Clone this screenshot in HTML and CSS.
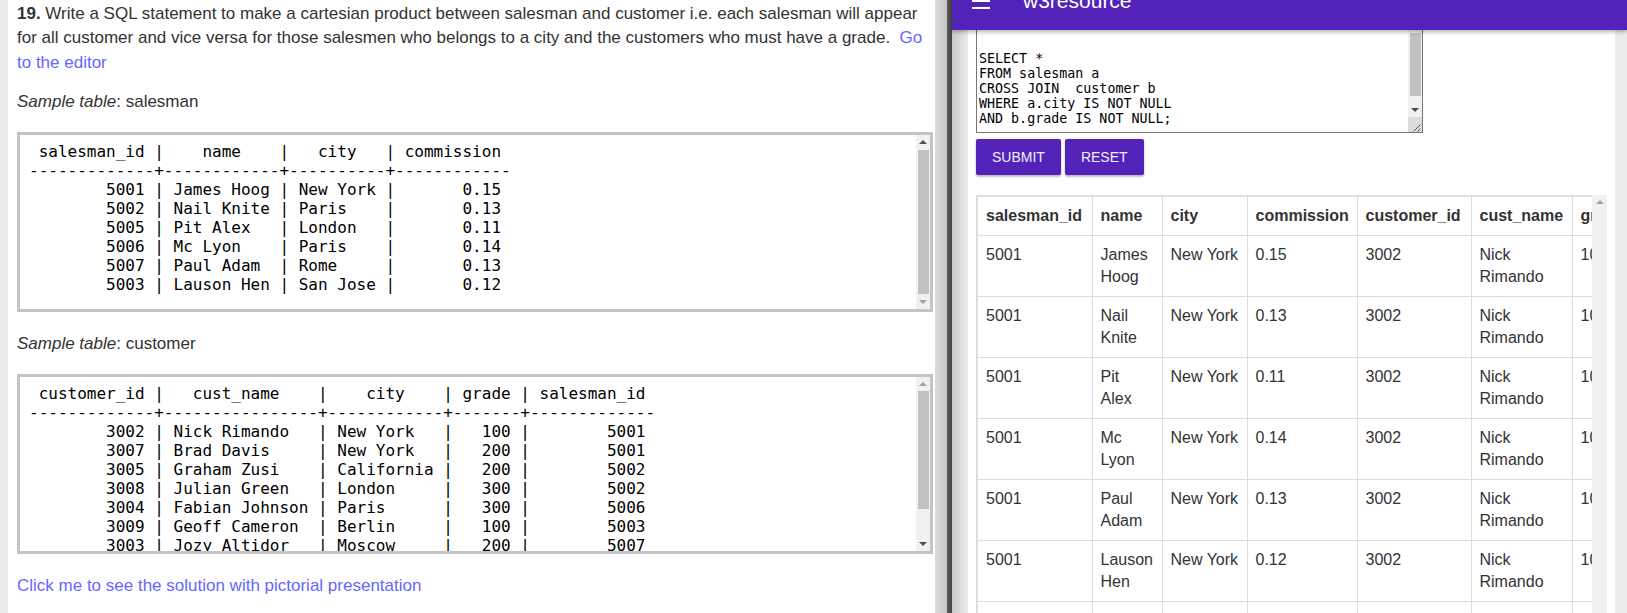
FILE: index.html
```html
<!DOCTYPE html>
<html lang="en">
<head>
<meta charset="utf-8">
<title>SQL Exercise 19</title>
<link rel="stylesheet" href="styles.css">
</head>
<body>
<div class="page">
  <main class="left">
    <p class="q"><b>19.</b> Write a SQL statement to make a cartesian product between salesman and customer i.e. each salesman will appear for all customer and vice versa for those salesmen who belongs to a city and the customers who must have a grade.&nbsp; <a class="lnk" href="#">Go to the editor</a></p>
    <p class="cap"><i>Sample table</i>: salesman</p>
    <div class="sbox">
      <pre class="sample">
 salesman_id |    name    |   city   | commission
-------------+------------+----------+------------
        5001 | James Hoog | New York |       0.15
        5002 | Nail Knite | Paris    |       0.13
        5005 | Pit Alex   | London   |       0.11
        5006 | Mc Lyon    | Paris    |       0.14
        5007 | Paul Adam  | Rome     |       0.13
        5003 | Lauson Hen | San Jose |       0.12</pre>
      <div class="vbar">
        <span class="arr up dark"></span>
        <span class="track"><span class="thumb t1"></span></span>
        <span class="arr dn"></span>
      </div>
    </div>
    <p class="cap"><i>Sample table</i>: customer</p>
    <div class="sbox">
      <pre class="sample">
 customer_id |   cust_name    |    city    | grade | salesman_id
-------------+----------------+------------+-------+-------------
        3002 | Nick Rimando   | New York   |   100 |        5001
        3007 | Brad Davis     | New York   |   200 |        5001
        3005 | Graham Zusi    | California |   200 |        5002
        3008 | Julian Green   | London     |   300 |        5002
        3004 | Fabian Johnson | Paris      |   300 |        5006
        3009 | Geoff Cameron  | Berlin     |   100 |        5003
        3003 | Jozy Altidor   | Moscow     |   200 |        5007
        3001 | Brad Guzan     | London     |       |        5005</pre>
      <div class="vbar">
        <span class="arr up"></span>
        <span class="track"><span class="thumb t2"></span></span>
        <span class="arr dn dark"></span>
      </div>
    </div>
    <p class="q"><a class="lnk" href="#">Click me to see the solution with pictorial presentation</a></p>
  </main>
  <div class="divider"></div>
  <section class="right">
    <header class="bar">
      <svg class="menu" width="18" height="16" viewBox="0 0 18 16" aria-hidden="true">
        <rect x="0" y="0" width="18" height="2" fill="#fff"/>
        <rect x="0" y="7" width="18" height="2" fill="#fff"/>
        <rect x="0" y="14" width="18" height="2" fill="#fff"/>
      </svg>
      <span class="brand">w3resource</span>
    </header>
    <div class="card">
      <div class="ed">
        <textarea class="editor" spellcheck="false">


SELECT *
FROM salesman a
CROSS JOIN  customer b
WHERE a.city IS NOT NULL
AND b.grade IS NOT NULL;
</textarea>
        <div class="vbar">
          <span class="arr up dark"></span>
          <span class="track"><span class="thumb t3"></span></span>
          <span class="arr dn dark"></span>
          <span class="grip">
            <svg width="14" height="15" viewBox="0 0 14 15" aria-hidden="true">
              <path d="M12.5 7.5 L5.5 14.5 M12.5 11.5 L9.5 14.5" stroke="#555" stroke-width="1" fill="none"/>
            </svg>
          </span>
        </div>
      </div>
      <div class="btns">
        <button class="btn" type="button">SUBMIT</button>
        <button class="btn" type="button">RESET</button>
      </div>
      <div class="results">
        <div class="tscroll">
          <table class="res">
            <colgroup>
              <col class="w1"><col class="w2"><col class="w3"><col class="w4"><col class="w5"><col class="w6"><col class="w7"><col class="w8"><col class="w9">
            </colgroup>
            <thead>
              <tr><th>salesman_id</th><th>name</th><th>city</th><th>commission</th><th>customer_id</th><th>cust_name</th><th>grade</th><th>city</th><th>salesman_id</th></tr>
            </thead>
            <tbody>
              <tr><td>5001</td><td>James Hoog</td><td class="nw">New York</td><td>0.15</td><td>3002</td><td>Nick Rimando</td><td>100</td><td class="nw">New York</td><td>5001</td></tr>
              <tr><td>5001</td><td>Nail Knite</td><td class="nw">New York</td><td>0.13</td><td>3002</td><td>Nick Rimando</td><td>100</td><td class="nw">New York</td><td>5001</td></tr>
              <tr><td>5001</td><td>Pit Alex</td><td class="nw">New York</td><td>0.11</td><td>3002</td><td>Nick Rimando</td><td>100</td><td class="nw">New York</td><td>5001</td></tr>
              <tr><td>5001</td><td>Mc Lyon</td><td class="nw">New York</td><td>0.14</td><td>3002</td><td>Nick Rimando</td><td>100</td><td class="nw">New York</td><td>5001</td></tr>
              <tr><td>5001</td><td>Paul Adam</td><td class="nw">New York</td><td>0.13</td><td>3002</td><td>Nick Rimando</td><td>100</td><td class="nw">New York</td><td>5001</td></tr>
              <tr><td>5001</td><td>Lauson Hen</td><td class="nw">New York</td><td>0.12</td><td>3002</td><td>Nick Rimando</td><td>100</td><td class="nw">New York</td><td>5001</td></tr>
              <tr><td>5001</td><td>James Hoog</td><td class="nw">New York</td><td>0.15</td><td>3007</td><td>Brad Davis</td><td>200</td><td class="nw">New York</td><td>5001</td></tr>
              <tr><td>5001</td><td>Nail Knite</td><td class="nw">New York</td><td>0.13</td><td>3007</td><td>Brad Davis</td><td>200</td><td class="nw">New York</td><td>5001</td></tr>
            </tbody>
          </table>
        </div>
        <div class="vbar rv">
          <span class="arr up"></span>
          <span class="track"></span>
        </div>
      </div>
    </div>
  </section>
</div>
</body>
</html>
```

FILE: styles.css
```css
html, body {
  margin: 0;
  padding: 0;
  height: 100%;
  overflow: hidden;
  background: #fff;
}

body {
  font-family: "Liberation Sans", Arial, sans-serif;
  color: #333;
}

.page {
  display: flex;
  width: 1627px;
  height: 613px;
  overflow: hidden;
}

/* ---------- left article ---------- */
.left {
  flex: none;
  width: 935px;
  box-sizing: border-box;
  border-left: 8px solid #ebebeb;
  padding: 2px 2px 0 9px;
  font-size: 17px;
  line-height: 1.42857;
  overflow: hidden;
  background: #fff;
}

.q {
  margin: 0 0 15px;
}

.cap {
  margin: 15px 0;
}

.lnk {
  color: #6666ff;
  text-decoration: none;
}

.sbox {
  display: flex;
  box-sizing: border-box;
  height: 180px;
  margin: 18px 0 20px;
  border: 3px solid #c4c4c4;
  background: #fff;
}

.sample {
  flex: 1;
  min-width: 0;
  margin: 0;
  padding: 7px 9px 0;
  overflow: hidden;
  font-family: "DejaVu Sans Mono", monospace;
  font-size: 16px;
  line-height: 19px;
  color: #000;
}

/* drawn scrollbars */
.vbar {
  flex: none;
  width: 14px;
  display: flex;
  flex-direction: column;
  background: #f1f1f1;
}

.arr {
  flex: none;
  height: 14px;
  display: flex;
  align-items: center;
  justify-content: center;
}

.arr::before {
  content: "";
  width: 0;
  height: 0;
  border-left: 4px solid transparent;
  border-right: 4px solid transparent;
}

.up::before {
  border-bottom: 4px solid #a3a3a3;
}

.dn::before {
  border-top: 4px solid #a3a3a3;
}

.up.dark::before {
  border-bottom-color: #505050;
}

.dn.dark::before {
  border-top-color: #505050;
}

.track {
  flex: 1;
  display: flex;
  flex-direction: column;
  min-height: 0;
}

.thumb {
  flex: none;
  margin: 0 1px 0 2px;
  background: #c1c1c1;
}

.t1 {
  margin-top: 1px;
  height: 144px;
}

.t2 {
  height: 118px;
}

.t3 {
  height: 63.5px;
}

.grip {
  flex: none;
  height: 15px;
  background: #dcdcdc;
  display: flex;
}

/* ---------- splitter ---------- */
.divider {
  flex: none;
  width: 17px;
  background: linear-gradient(to right, #dcdcdc 0, #c6c6c6 12px, #5a5a5a 12px, #454545 17px);
}

/* ---------- right editor panel ---------- */
.right {
  flex: 1;
  display: flex;
  flex-direction: column;
  min-width: 0;
  background: linear-gradient(to right, #c8c8c8 0, #ececec 16px, #ececec 100%);
}

.bar {
  flex: none;
  box-sizing: border-box;
  height: 56px;
  margin-top: -26px;
  display: flex;
  align-items: flex-end;
  padding-left: 20px;
  background: #5322b8;
  color: #fff;
  position: relative;
  z-index: 2;
  box-shadow: 0 2px 4px rgba(0, 0, 0, 0.3);
}

.menu {
  flex: none;
  display: block;
  margin-bottom: 20.7px;
}

.brand {
  margin-left: 33px;
  margin-bottom: 17px;
  font-family: "Liberation Sans", Arial, sans-serif;
  font-size: 21px;
  line-height: 24px;
  color: #fff;
}

.card {
  flex: 1;
  margin: -12.5px 12px 0 16px;
  padding: 0 8px;
  background: #fff;
  min-height: 0;
}

.ed {
  display: flex;
  box-sizing: border-box;
  width: 447px;
  height: 115.5px;
  border: 1px solid #767676;
  background: #fff;
}

.editor {
  flex: 1;
  min-width: 0;
  margin: 0;
  padding: 2px;
  border: 0;
  outline: none;
  resize: none;
  overflow: hidden;
  font-family: "DejaVu Sans Mono", monospace;
  font-size: 13.333px;
  line-height: 15px;
  color: #000;
  background: #fff;
}

.btns {
  display: flex;
  gap: 4px;
  margin-top: 6px;
}

.btn {
  height: 36px;
  padding: 0 16px;
  border: 0;
  border-radius: 2px;
  background: #5322b8;
  color: #f4f0ff;
  font-family: "Liberation Sans", Arial, sans-serif;
  font-size: 14px;
  box-shadow: 0 2px 2px rgba(0, 0, 0, 0.24), 0 0 2px rgba(0, 0, 0, 0.12);
}

.results {
  display: flex;
  margin-top: 20px;
  height: 460px;
}

.tscroll {
  flex: 1;
  min-width: 0;
  overflow: hidden;
}

.rv {
  width: 15px;
}

.res {
  table-layout: fixed;
  border-collapse: collapse;
  width: 870px;
  border: 2px solid #dedede;
  font-size: 16px;
  line-height: 22px;
  color: #333;
}

.w1 { width: 115px; }
.w2 { width: 70px; }
.w3 { width: 85px; }
.w4 { width: 110px; }
.w5 { width: 114px; }
.w6 { width: 101px; }
.w7 { width: 70px; }
.w8 { width: 90px; }
.w9 { width: 115px; }

.res th,
.res td {
  border: 1px solid #ddd;
  padding: 8px;
  text-align: left;
  vertical-align: top;
  overflow: hidden;
}

.res th {
  font-weight: bold;
  white-space: nowrap;
}

.res .nw {
  white-space: nowrap;
}
```
